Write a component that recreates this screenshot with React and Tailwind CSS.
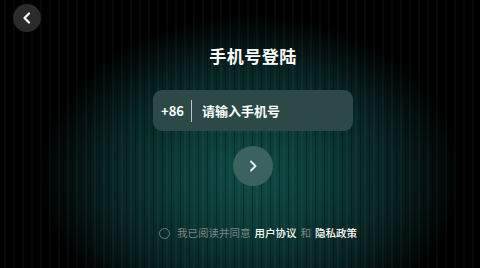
import React from 'react';

export default function App() {
  return (
    <div
      className="relative w-[480px] h-[268px] overflow-hidden bg-black flex flex-col items-center"
      style={{ fontFamily: '"Noto Sans CJK SC", "Noto Sans", sans-serif' }}
    >
      {/* background glow */}
      <div className="absolute inset-0 bg-[radial-gradient(ellipse_210px_160px_at_250px_175px,#0e4b45_0%,#0a3a36_35%,#06201f_70%,#000000_100%)]"></div>
      <div className="absolute inset-0 bg-[repeating-linear-gradient(90deg,rgba(0,0,0,0.3)_0px,rgba(0,0,0,0.3)_1px,transparent_1px,transparent_4px,rgba(255,255,255,0.03)_4px,rgba(255,255,255,0.03)_6px,transparent_6px,transparent_9px)]"></div>

      <button className="absolute left-[13px] top-[4px] w-[28px] h-[28px] rounded-full bg-[#2b2b2b] flex items-center justify-center">
        <svg width="12" height="12" viewBox="0 0 12 12" fill="none">
          <path d="M8 1.5L3.5 6L8 10.5" stroke="#fff" strokeWidth="2.2" strokeLinecap="round" strokeLinejoin="round" />
        </svg>
      </button>

      <div className="relative mt-[43px] ml-[26px] text-white text-[17px] font-bold leading-[26px] tracking-[0.5px]">手机号登陆</div>

      <div className="relative mt-[21px] ml-[26px] w-[200px] h-[41px] rounded-[9px] bg-[#2c4947] flex items-center px-[8px]">
        <span className="text-white text-[13px] font-bold">+86</span>
        <span className="ml-[7px] w-px h-[22px] bg-[#b8c4c2]"></span>
        <span className="ml-[10px] text-white text-[13px] font-bold">请输入手机号</span>
      </div>

      <button className="relative mt-[15px] ml-[26px] w-[40px] h-[40px] rounded-full bg-[#3b625e] flex items-center justify-center">
        <svg width="12" height="14" viewBox="0 0 12 14" fill="none">
          <path d="M4 2.5L8.5 7L4 11.5" stroke="#e6eeee" strokeWidth="2" strokeLinecap="round" strokeLinejoin="round" />
        </svg>
      </button>

      <div className="relative mt-[40px] ml-[36px] flex items-center text-[10.5px] leading-[14px]">
        <span className="w-[11px] h-[11px] rounded-full border border-[#6f7a79] mr-[7px]"></span>
        <span className="text-[#7b8584]">我已阅读并同意</span>
        <span className="text-white font-medium ml-[4px]">用户协议</span>
        <span className="text-[#7b8584] mx-[4px]">和</span>
        <span className="text-white font-medium">隐私政策</span>
      </div>
    </div>
  );
}
